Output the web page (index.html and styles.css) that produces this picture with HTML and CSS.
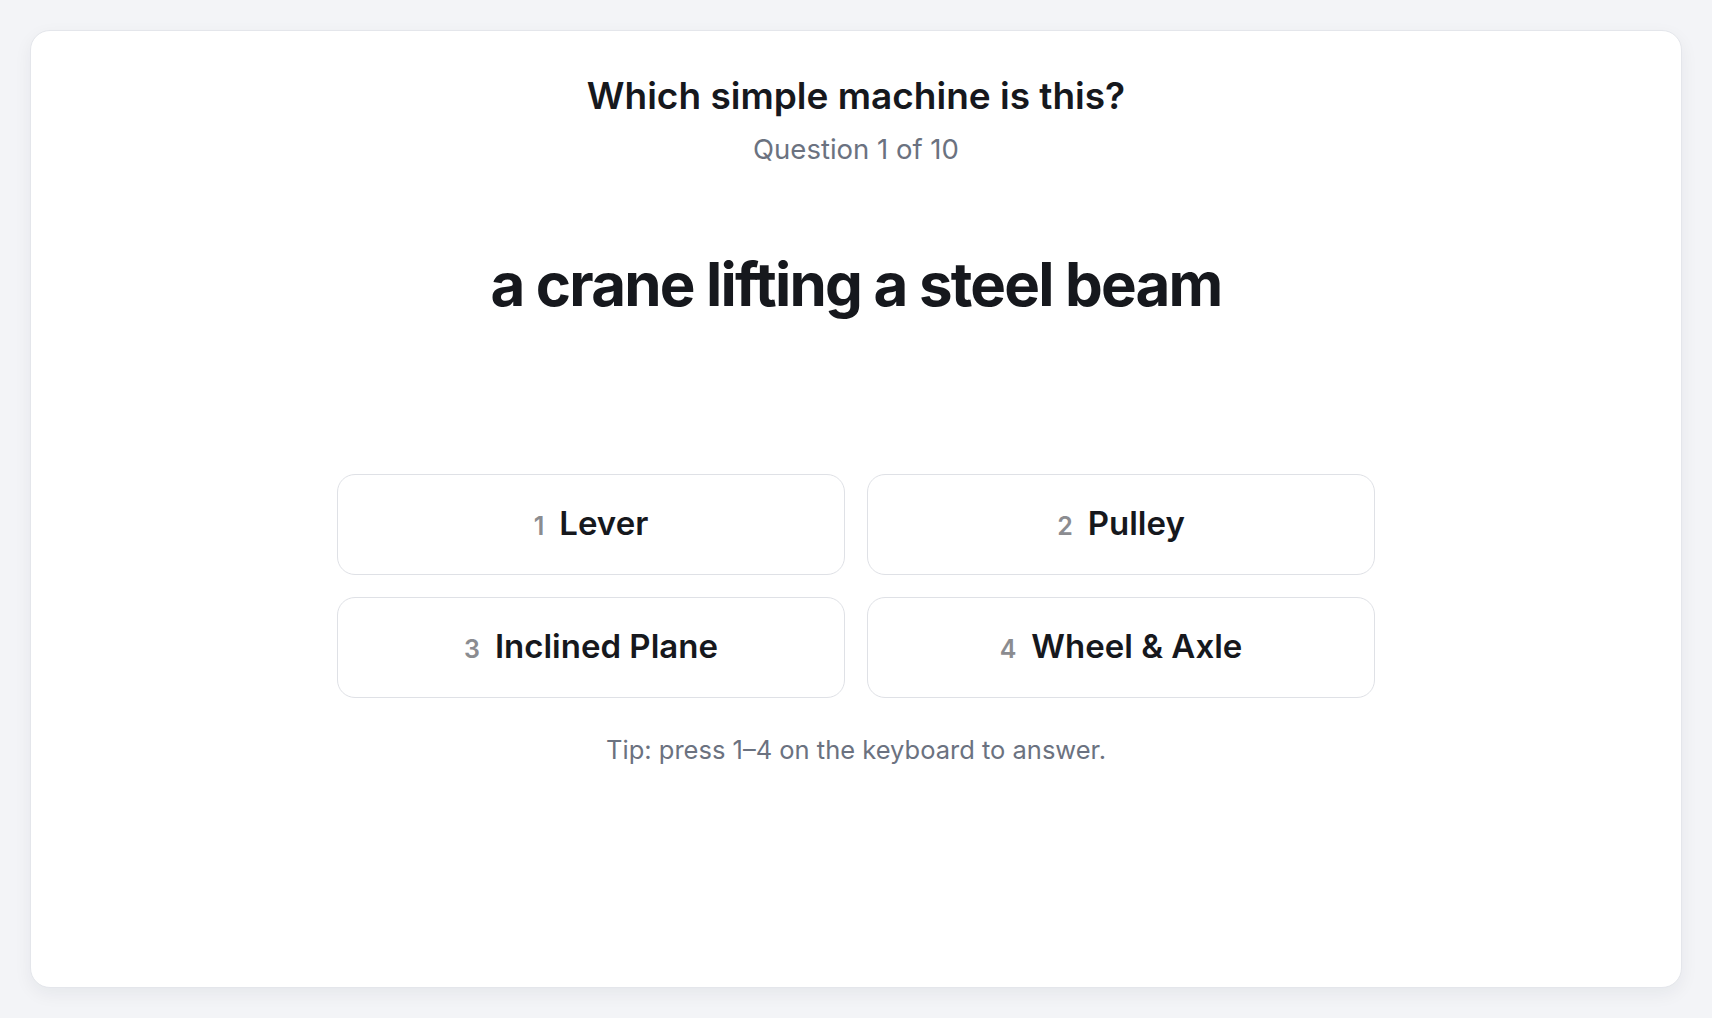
FILE: index.html
```html
<!DOCTYPE html>
<html lang="en">
<head>
  <meta charset="UTF-8" />
  <title>Simple Machines Quiz</title>
  <link rel="stylesheet" href="styles.css">
</head>
<body>
  <!-- Quiz card -->
  <div class="quiz-card">
    <h1 class="quiz-title">Which simple machine is this?</h1>
    <div class="quiz-progress">Question 1 of 10</div>

    <div class="prompt">a crane lifting a steel beam</div>

    <div class="choices">
      <button class="choice"><span class="choice-key">1</span><span class="choice-label">Lever</span></button>
      <button class="choice"><span class="choice-key">2</span><span class="choice-label">Pulley</span></button>
      <button class="choice"><span class="choice-key">3</span><span class="choice-label">Inclined Plane</span></button>
      <button class="choice"><span class="choice-key">4</span><span class="choice-label">Wheel &amp; Axle</span></button>
    </div>

    <p class="tip">Tip: press 1–4 on the keyboard to answer.</p>
  </div>
</body>
</html>
```

FILE: styles.css
```css
html, body {
  height: 100%;
}
body {
  margin: 0;
  padding: 30px;
  box-sizing: border-box;
  background: #f3f4f7;
  font-family: Inter, "Noto Sans", sans-serif;
  color: #16181d;
}

/* Card */
.quiz-card {
  height: 100%;
  box-sizing: border-box;
  background: #ffffff;
  border: 1px solid #e4e6eb;
  border-radius: 20px;
  box-shadow: 0 6px 18px rgba(20, 28, 45, 0.06);
  padding: 44px 40px;
  display: flex;
  flex-direction: column;
  align-items: center;
}

.quiz-title {
  margin: 0;
  font-size: 37px;
  line-height: 42px;
  font-weight: 600;
}
.quiz-progress {
  margin-top: 16px;
  font-size: 27.5px;
  line-height: 32px;
  color: #6b7280;
}

.prompt {
  margin-top: 83px;
  font-size: 60px;
  line-height: 72px;
  font-weight: 700;
  letter-spacing: -0.03em;
}

/* Choices */
.choices {
  margin-top: 154px;
  width: 1038px;
  display: grid;
  grid-template-columns: 1fr 1fr;
  gap: 22px;
}
.choice {
  height: 101px;
  background: #ffffff;
  border: 1.5px solid #dfe1e6;
  border-radius: 18px;
  font-family: inherit;
  color: #16181d;
  display: flex;
  justify-content: center;
  align-items: baseline;
  padding: 0 20px;
  padding-top: 28px;
  box-sizing: border-box;
  cursor: pointer;
}
.choice-key {
  font-size: 25px;
  font-weight: 600;
  color: #8b8c90;
  margin-right: 15px;
}
.choice-label {
  font-size: 33px;
  font-weight: 600;
}

.tip {
  margin: 37px 0 0;
  font-size: 25.5px;
  line-height: 30px;
  color: #6b7280;
}
```
